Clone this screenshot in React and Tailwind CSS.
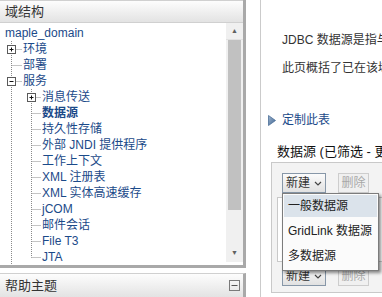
const tree = [
  { level: 0, label: "maple_domain" },
  { level: 1, label: "环境", toggle: "plus" },
  { level: 1, label: "部署" },
  { level: 1, label: "服务", toggle: "minus" },
  { level: 2, label: "消息传送", toggle: "plus" },
  { level: 2, label: "数据源", bold: true },
  { level: 2, label: "持久性存储" },
  { level: 2, label: "外部 JNDI 提供程序" },
  { level: 2, label: "工作上下文" },
  { level: 2, label: "XML 注册表" },
  { level: 2, label: "XML 实体高速缓存" },
  { level: 2, label: "jCOM" },
  { level: 2, label: "邮件会话" },
  { level: 2, label: "File T3" },
  { level: 2, label: "JTA", last: true },
];

function ToggleBox({ x, type }) {
  return (
    <g>
      <rect x={x - 4} y={4.5} width={8} height={8} fill="#fff" stroke="#5a5a5a" />
      <line x1={x - 2} y1={8.5} x2={x + 2} y2={8.5} stroke="#111" />
      {type === "plus" && <line x1={x} y1={6.5} x2={x} y2={10.5} stroke="#111" />}
    </g>
  );
}

function TreeRow({ item }) {
  if (item.level === 0) {
    return <div className="h-[16px] pl-[5px] leading-[16px] text-[#1b4a89]">{item.label}</div>;
  }
  const w = item.level === 1 ? 23 : 42;
  const x = item.level === 1 ? 11.5 : 31.5;
  return (
    <div className="flex h-[16px] items-center">
      <svg width={w} height={16} className="shrink-0">
        <line x1={11.5} y1={0} x2={11.5} y2={16} stroke="#8a8a8a" strokeDasharray="1 1" />
        {item.level === 2 && (
          <line x1={31.5} y1={0} x2={31.5} y2={item.last ? 8.5 : 16} stroke="#8a8a8a" strokeDasharray="1 1" />
        )}
        <line x1={x} y1={8.5} x2={w - 1} y2={8.5} stroke="#8a8a8a" strokeDasharray="1 1" />
        {item.toggle && <ToggleBox x={x} type={item.toggle} />}
      </svg>
      <span className={`whitespace-nowrap leading-[16px] text-[#1b4a89] ${item.bold ? "font-bold" : ""}`}>
        {item.label}
      </span>
    </div>
  );
}

function Chevron() {
  return (
    <svg width="8" height="5" viewBox="0 0 8 5" className="ml-[4px]">
      <path d="M1 1 L4 4 L7 1" fill="none" stroke="#444" strokeWidth="1.2" />
    </svg>
  );
}

function ButtonRow() {
  return (
    <div className="flex items-center gap-[12px]">
      <div className="flex h-[20px] w-[44px] items-center justify-center border border-[#8797a8] bg-linear-to-b from-[#fbfbfb] to-[#e1e1e1] text-[#333]">
        新建
        <Chevron />
      </div>
      <div className="flex h-[20px] w-[31px] items-center justify-center border border-[#cdcdcd] bg-[#f0f0f0] text-[#a8a8a8]">
        删除
      </div>
    </div>
  );
}

export default function App() {
  return (
    <div className="flex h-[297px] w-[382px] overflow-hidden bg-white text-[12px] font-['Liberation_Sans','Noto_Sans_CJK_SC',sans-serif] text-[#333]">
      {/* left column */}
      <div className="flex w-[246px] shrink-0 flex-col">
        <div className="flex h-[268px] flex-col border-r-[3px] border-b-[3px] border-[#a9a9a9]">
          <div className="h-[23px] border-t border-b border-[#d0d0d0] bg-linear-to-b from-[#fdfdfd] to-[#e3e3e3] pl-[5px] text-[13px] leading-[21px] text-[#333]">
            域结构
          </div>
          <div className="flex min-h-0 flex-1">
            <div className="min-w-0 flex-1 overflow-hidden pt-[2px]">
              {tree.map((item) => (
                <TreeRow key={item.label} item={item} />
              ))}
            </div>
            <div className="mb-[3px] flex w-[17px] shrink-0 flex-col bg-[#f0f0f0]">
              <div className="flex h-[17px] items-center justify-center border-b border-[#e2e2e2] text-[7px] text-[#606060]">▲</div>
              <div className="mx-[2px] h-[170px] bg-[#c1c1c1]" />
              <div className="flex-1" />
              <div className="flex h-[17px] items-center justify-center text-[7px] text-[#606060]">▼</div>
            </div>
          </div>
        </div>
        <div className="mt-[5px] flex h-[24px] items-center justify-between border-t border-r-[3px] border-[#d0d0d0] border-r-[#a9a9a9] bg-linear-to-b from-[#fdfdfd] to-[#e3e3e3] pl-[5px] pr-[3px] text-[13px] text-[#333]">
          <span>帮助主题</span>
          <svg width="11" height="11" viewBox="0 0 11 11">
            <rect x="0.5" y="0.5" width="10" height="10" fill="none" stroke="#7a7a7a" />
            <line x1="2.5" y1="5.5" x2="8.5" y2="5.5" stroke="#555" />
          </svg>
        </div>
      </div>

      {/* right content */}
      <div className="ml-[14px] min-w-0 flex-1 overflow-hidden border-l border-[#cbcbcb]">
        <p className="whitespace-nowrap pl-[21px] pt-[32px] leading-[16px]">
          JDBC 数据源是指与数据库之间的连接池对象。
        </p>
        <p className="mt-[12px] whitespace-nowrap pl-[21px] leading-[16px]">
          此页概括了已在该域中创建的 JDBC 数据源对象。
        </p>
        <div className="mt-[36px] flex h-[16px] items-center pl-[7px]">
          <svg width="8" height="11" viewBox="0 0 8 11" className="mr-[6px]">
            <defs>
              <linearGradient id="tri" x1="0" y1="0" x2="1" y2="1">
                <stop offset="0" stopColor="#9fb6cf" />
                <stop offset="1" stopColor="#3d6391" />
              </linearGradient>
            </defs>
            <path d="M0.5 0.5 L7.5 5.5 L0.5 10.5 Z" fill="url(#tri)" stroke="#4b6e98" strokeWidth="0.8" />
          </svg>
          <span className="text-[#1b4a89]">定制此表</span>
        </div>
        <p className="mt-[16px] whitespace-nowrap pl-[16px] text-[13px] leading-[16px] text-[#111]">
          数据源 (已筛选 - 更多列存在)
        </p>
        <div className="ml-[10px] mt-[2px] h-[131px] w-[200px] border border-[#c9c9c9] bg-[#f3f3f3]">
          <div className="relative pl-[10px] pt-[10px]">
            <ButtonRow />
            <div className="absolute left-[10px] top-[30px] z-10 w-[97px] border border-[#7c7c7c] bg-[#fbfbfb] px-[1px] pt-[1px] shadow-[2px_2px_3px_rgba(0,0,0,0.45)]">
              <div className="flex h-[22px] items-center bg-[#dbe3eb] pl-[4px] text-[#222]">一般数据源</div>
              <div className="mt-[3px] flex h-[22px] items-center pl-[4px] text-[#222]">GridLink 数据源</div>
              <div className="mt-[3px] mb-[3px] flex h-[22px] items-center pl-[4px] text-[#222]">多数据源</div>
            </div>
          </div>
          <div className="ml-[5px] mt-[4px] h-[65px] border border-[#c9c9c9] bg-white" />
          <div className="pl-[10px] pt-[4px]">
            <ButtonRow />
          </div>
        </div>
      </div>
    </div>
  );
}
